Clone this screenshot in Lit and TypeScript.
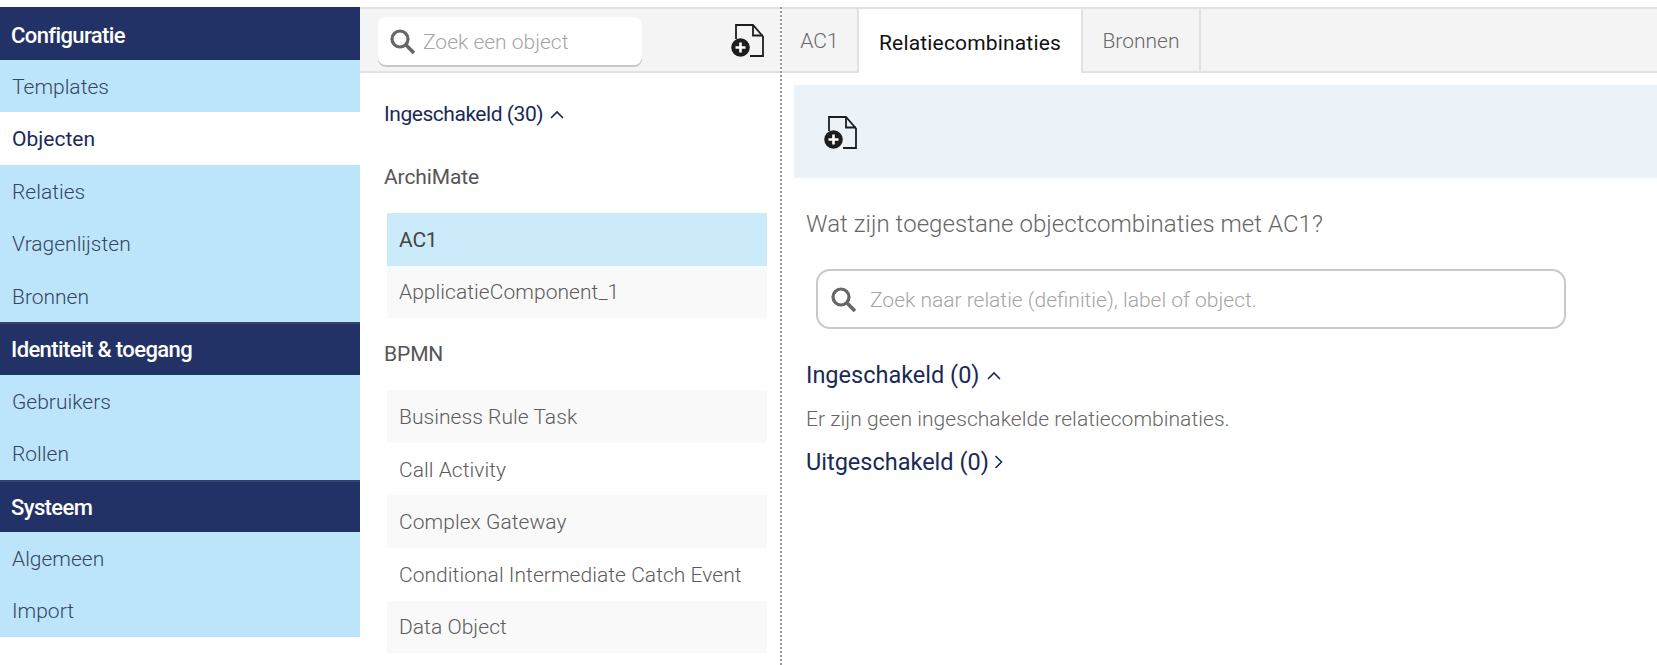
import { LitElement, html, css, svg } from "lit";
import { customElement } from "lit/decorators.js";

const fileIcon = svg`<svg class="file" width="33" height="33" viewBox="0 0 33 33" fill="none">
  <path d="M5 15V1H22L32 12.5V32H19" stroke="#1d1d1d" stroke-width="1.8"/>
  <path d="M22 1V11.5H32" stroke="#1d1d1d" stroke-width="1.8"/>
  <circle cx="9.5" cy="23.5" r="9.3" fill="#1d1d1d"/>
  <path d="M9.5 18.5V28.5M4.5 23.5H14.5" stroke="#fff" stroke-width="2.6"/>
</svg>`;

const searchIcon = svg`<svg class="mag" width="25" height="25" viewBox="0 0 25 25" fill="none">
  <circle cx="10" cy="10" r="8" stroke="#666" stroke-width="3.2"/>
  <path d="M16 16L24 24" stroke="#666" stroke-width="3.6"/>
</svg>`;

const chevUp = svg`<svg class="chev" width="14" height="9" viewBox="0 0 14 9" fill="none"><path d="M1 8L7 2L13 8" stroke="#1a2a55" stroke-width="1.6"/></svg>`;
const chevRight = svg`<svg class="chev" width="9" height="14" viewBox="0 0 9 14" fill="none"><path d="M1.5 1L7.5 7L1.5 13" stroke="#1a2a55" stroke-width="1.6"/></svg>`;

@customElement("app-root")
export class AppRoot extends LitElement {
  static styles = css`
    :host { display: block; width: 1657px; height: 665px; overflow: hidden; background: #fff;
      font-family: Roboto, "Liberation Sans", sans-serif; font-weight: 300; font-size: 21px; color: #555; }
    * { box-sizing: border-box; }
    .app { display: grid; grid-template-columns: 360px 420px 1fr; height: 665px; padding-top: 7px; }

    .side { display: flex; flex-direction: column; }
    .sec { height: 53px; flex: none; background: #233266; color: #fff; font-weight: 500; font-size: 22px; letter-spacing: -0.6px;
      display: flex; align-items: center; padding: 3px 0 0 11px; }
    .sec.lined { border-top: 2px solid #35426f; padding-top: 1px; }
    .sec.last { height: 52px; }
    .nav { height: 52.4px; flex: none; background: #bce5fc; color: #37455f; display: flex; align-items: center; padding: 1.6px 0 0 12px; }
    .nav.on { background: #fff; color: #1a2a55; font-weight: 400; }

    .mid { display: flex; flex-direction: column; min-width: 0; }
    .toolbar { height: 66px; flex: none; background: #f4f4f4; border-top: 2px solid #e2e2e2; border-bottom: 2px solid #e2e2e2;
      display: flex; align-items: center; justify-content: space-between; padding: 0 16px 0 18px; }
    .sbox { width: 264px; height: 48px; background: #fff; border-radius: 8px; box-shadow: 0 2px 0 #c8c8c8;
      display: flex; align-items: center; gap: 8px; padding: 1px 0 0 12px; color: #a5a5a5; margin-top: 2px; }
    .toolbar .file { margin-top: 1px; }
    .midbody { padding: 0 13px 0 24px; flex: 1; }
    .group { display: flex; align-items: center; gap: 7px; color: #1a2a55; font-weight: 400; letter-spacing: -0.46px; }
    .midbody > .group { margin-top: 26px; height: 30px; }
    .cat { font-weight: 400; color: #555; letter-spacing: -0.1px; height: 30px; display: flex; align-items: center; }
    .cat.a { margin-top: 33px; margin-bottom: 21px; }
    .cat.b { margin-top: 21px; margin-bottom: 21px; }
    .list { margin-left: 3px; display: flex; flex-direction: column; }
    .row { height: 52.6px; display: flex; align-items: center; padding: 1px 0 0 12px; background: #fff; color: #5c5c5c; letter-spacing: 0.05px; }
    .row.alt { background: #f9f9f9; }
    .row.sel { background: #cbebfa; color: #444; font-weight: 400; letter-spacing: -0.2px; }

    .right { border-left: 2px dotted #999; display: flex; flex-direction: column; min-width: 0; }
    .tabs { height: 66px; flex: none; background: #f4f4f4; border-top: 2px solid #e2e2e2; border-bottom: 2px solid #e2e2e2; display: flex; }
    .tab { display: flex; align-items: center; justify-content: center; margin-bottom: -2px;
      border-right: 2px solid #e2e2e2; color: #6a6a6a; height: 64px; padding-top: 1px; }
    .tab.t1 { width: 77px; height: 62px; margin-bottom: 0; }
    .tab.on { background: #fff; color: #111; font-weight: 400; width: 224px; padding-top: 3px; letter-spacing: 0.17px; }
    .tab.t3 { width: 118px; height: 62px; margin-bottom: 0; }
    .body { padding: 12px 0 0 12px; flex: 1; }
    .band { height: 93px; background: #ebf3f9; display: flex; align-items: center; padding-left: 30px; }
    .band .file { margin-top: 2px; }
    .q { margin: 31px 0 0 12px; height: 30px; display: flex; align-items: center; font-size: 24px; color: #666; letter-spacing: 0.05px; }
    .rs { margin: 30px 0 0 22px; width: 750px; height: 60px; border: 2px solid #c9c9c9; border-radius: 14px;
      display: flex; align-items: center; gap: 14px; padding: 1px 0 0 13px; color: #a5a5a5; }
    .r-sec { margin-left: 12px; font-size: 23.5px; letter-spacing: 0; height: 30px; }
    .r-sec.a { margin-top: 31px; }
    .empty { margin: 16px 0 0 12px; height: 26px; display: flex; align-items: center; color: #666; letter-spacing: 0.05px; }
    .r-sec.b { margin-top: 15px; gap: 5px; }
  `;

  render() {
    const sections: [string, string, string[]][] = [
      ["Configuratie", "", ["Templates", "Objecten", "Relaties", "Vragenlijsten", "Bronnen"]],
      ["Identiteit & toegang", "lined", ["Gebruikers", "Rollen"]],
      ["Systeem", "lined last", ["Algemeen", "Import"]],
    ];
    return html`<div class="app">
      <div class="side">
        ${sections.map(([h, c, items]) => html`<div class="sec ${c}">${h}</div>
          ${items.map((i) => html`<div class="nav ${i === "Objecten" ? "on" : ""}">${i}</div>`)}`)}
      </div>
      <div class="mid">
        <div class="toolbar">
          <div class="sbox">${searchIcon}<span>Zoek een object</span></div>
          ${fileIcon}
        </div>
        <div class="midbody">
          <div class="group">Ingeschakeld (30) ${chevUp}</div>
          <div class="cat a">ArchiMate</div>
          <div class="list">
            <div class="row sel">AC1</div>
            <div class="row alt">ApplicatieComponent_1</div>
          </div>
          <div class="cat b">BPMN</div>
          <div class="list">
            <div class="row alt">Business Rule Task</div>
            <div class="row">Call Activity</div>
            <div class="row alt">Complex Gateway</div>
            <div class="row">Conditional Intermediate Catch Event</div>
            <div class="row alt">Data Object</div>
          </div>
        </div>
      </div>
      <div class="right">
        <div class="tabs">
          <div class="tab t1">AC1</div>
          <div class="tab on">Relatiecombinaties</div>
          <div class="tab t3">Bronnen</div>
        </div>
        <div class="body">
          <div class="band">${fileIcon}</div>
          <div class="q">Wat zijn toegestane objectcombinaties met AC1?</div>
          <div class="rs">${searchIcon}<span>Zoek naar relatie (definitie), label of object.</span></div>
          <div class="group r-sec a">Ingeschakeld (0) ${chevUp}</div>
          <div class="empty">Er zijn geen ingeschakelde relatiecombinaties.</div>
          <div class="group r-sec b">Uitgeschakeld (0) ${chevRight}</div>
        </div>
      </div>
    </div>`;
  }
}
